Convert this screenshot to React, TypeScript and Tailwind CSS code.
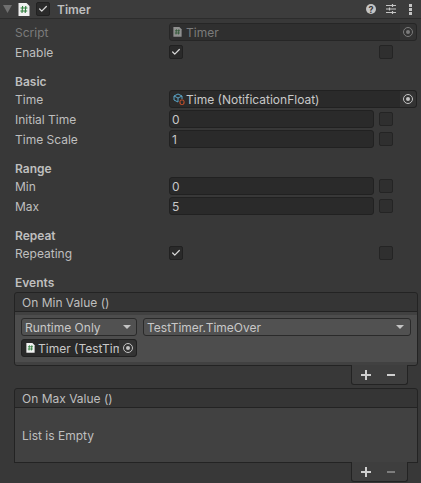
import React from "react";
import { Check } from "lucide-react";

function ScriptIcon({ size = 12, dim = false }: { size?: number; dim?: boolean }) {
  return (
    <svg width={size} height={size * 13 / 12} viewBox="0 0 12 13" className={`shrink-0 ${dim ? "opacity-50" : ""}`}>
      <path d="M0.5 0h8l3 3v10h-11z" fill="#f1f1f1" />
      <path d="M4.6 3 4 10M7.8 3l-.6 7M2.6 5h6.8M2.4 8h6.8" stroke="#2e7d3c" strokeWidth="1.1" fill="none" />
    </svg>
  );
}

function Toggle() {
  return (
    <div className="w-[14px] h-[14px] rounded-[2px] bg-[#2a2a2a] border border-[#212121] flex items-center justify-center">
      <Check size={10} strokeWidth={3} className="text-[#d8d8d8]" />
    </div>
  );
}

function Empty() {
  return <div className="w-[14px] h-[14px] rounded-[2px] bg-[#2f2f2f] border border-[#242424]" />;
}

function Picker({ dim = false, wide = false }: { dim?: boolean; wide?: boolean }) {
  return (
    <div className={`${wide ? "w-[17px]" : "w-[16px]"} h-full bg-[#333333] rounded-r-[3px] flex items-center justify-center`}>
      <div className={`w-[10px] h-[10px] rounded-full border flex items-center justify-center ${dim ? "border-[#7c7c7c]" : "border-[#c4c4c4]"}`}>
        <div className={`w-[4px] h-[4px] rounded-full ${dim ? "bg-[#7c7c7c]" : "bg-[#c4c4c4]"}`} />
      </div>
    </div>
  );
}

function Row({ label, children, dim = false }: { label: string; children: React.ReactNode; dim?: boolean }) {
  return (
    <div className="h-[20px] flex items-center">
      <div className={`w-[154px] shrink-0 pt-[2px] ${dim ? "text-[#7b7b7b]" : "text-[#bfbfbf]"}`}>{label}</div>
      {children}
    </div>
  );
}

function NumberRow({ label, value }: { label: string; value: string }) {
  return (
    <Row label={label}>
      <div className="w-[205px] h-[18px] rounded-[3px] bg-[#2a2a2a] border border-[#212121] pl-[2px] pt-[2px] flex items-center text-[#c8c8c8]">
        {value}
      </div>
      <div className="ml-[5px]">
        <Empty />
      </div>
    </Row>
  );
}

function ToggleRow({ label }: { label: string }) {
  return (
    <Row label={label}>
      <Toggle />
      <div className="ml-[196px]">
        <Empty />
      </div>
    </Row>
  );
}

function Section({ title, children }: { title: string; children: React.ReactNode }) {
  return (
    <div className="mt-[11px]">
      <div className="h-[16px] pt-[2px] flex items-center font-semibold text-[#bfbfbf]">{title}</div>
      {children}
    </div>
  );
}

function Footer({ minusDim = false }: { minusDim?: boolean }) {
  return (
    <div className="flex justify-end pr-[10px]">
      <div className="w-[57px] h-[20px] -mt-px pl-[9px] bg-[#3e3e3e] border border-t-0 border-[#232323] rounded-b-[3px] flex items-center gap-[15px]">
        <svg width="10" height="10" viewBox="0 0 10 10">
          <path d="M4 0h2v4h4v2H6v4H4V6H0V4h4z" fill="#cfcfcf" />
        </svg>
        <svg width="10" height="10" viewBox="0 0 10 10">
          <rect x="1" y="4" width="8" height="2" fill={minusDim ? "#7d7d7d" : "#cfcfcf"} />
        </svg>
      </div>
    </div>
  );
}

function ListHeader({ title }: { title: string }) {
  return (
    <div className="h-[20px] bg-[#353535] border border-[#232323] rounded-t-[3px] pl-[7px] pt-px flex items-center text-[#bfbfbf]">
      {title}
    </div>
  );
}

function Arrow() {
  return (
    <svg width="8" height="4" viewBox="0 0 8 4">
      <path d="M0 0h8L4 4z" fill="#c4c4c4" />
    </svg>
  );
}

export default function App() {
  return (
    <div
      className="w-[421px] h-[483px] overflow-hidden bg-[#383838] text-[12px] leading-none"
      style={{ fontFamily: "Inter, sans-serif" }}
    >
      {/* component header */}
      <div className="h-[19px] bg-[#3c3c3c] border-b border-[#2c2c2c] flex items-center pl-[3px]">
        <svg width="9" height="8" viewBox="0 0 9 8">
          <path d="M0 0h9L4.5 8z" fill="#6f6f6f" />
        </svg>
        <div className="ml-[6px]">
          <ScriptIcon size={12} />
        </div>
        <div className="ml-[6px]">
          <Toggle />
        </div>
        <div className="ml-[7px] pt-px font-semibold text-[#bfbfbf]">Timer</div>
        <div className="ml-auto flex items-center pr-[9px]">
          <div className="w-[10px] h-[10px] rounded-full bg-[#c4c4c4] text-[#383838] text-[9px] font-bold flex items-center justify-center">?</div>
          <svg width="10" height="10" viewBox="0 0 10 10" className="ml-[10px]">
            <path d="M0 1.5h10M0 5h10M0 8.5h10" stroke="#c4c4c4" strokeWidth="1" />
            <path d="M6.5 0v3M3.5 3.5v3M6.5 7v3" stroke="#c4c4c4" strokeWidth="1.2" />
          </svg>
          <svg width="3" height="11" viewBox="0 0 3 11" className="ml-[13px]">
            <rect x="0" y="0" width="3" height="3" fill="#c4c4c4" />
            <rect x="0" y="4" width="3" height="3" fill="#c4c4c4" />
            <rect x="0" y="8" width="3" height="3" fill="#c4c4c4" />
          </svg>
        </div>
      </div>

      <div className="pl-[15px] pr-[4px] pt-[3px]">
        <Row label="Script" dim>
          <div className="w-[248px] h-[18px] rounded-[3px] bg-[#2f2f2f] border border-[#262626] flex items-center text-[#7b7b7b]">
            <div className="w-[16px] shrink-0 pl-[3px]">
              <ScriptIcon size={9} dim />
            </div>
            <span className="pt-px">Timer</span>
            <div className="ml-auto h-full">
              <Picker dim />
            </div>
          </div>
        </Row>
        <ToggleRow label="Enable" />

        <Section title="Basic">
          <Row label="Time">
            <div className="w-[248px] h-[18px] rounded-[3px] bg-[#2a2a2a] border border-[#212121] flex items-center text-[#c8c8c8]">
              <div className="w-[16px] shrink-0 pl-[3px]">
                <svg width="12" height="12" viewBox="0 0 12 12">
                  <path d="M5 1 9 3v3M5 1 1 3v4l4 2M1 3l4 2 4-2M5 5v4" stroke="#5aa5c8" strokeWidth="1" fill="none" />
                  <rect x="7" y="7" width="4" height="4.5" rx="1.5" stroke="#d9552b" strokeWidth="1" fill="none" />
                </svg>
              </div>
              <span className="pt-px">Time (NotificationFloat)</span>
              <div className="ml-auto h-full">
                <Picker />
              </div>
            </div>
          </Row>
          <NumberRow label="Initial Time" value="0" />
          <NumberRow label="Time Scale" value="1" />
        </Section>

        <Section title="Range">
          <NumberRow label="Min" value="0" />
          <NumberRow label="Max" value="5" />
        </Section>

        <Section title="Repeat">
          <ToggleRow label="Repeating" />
        </Section>

        <div className="mt-[11px] h-[16px] pt-[2px] flex items-center font-semibold text-[#bfbfbf]">Events</div>

        <div className="mt-[2px] -mx-px">
          <ListHeader title="On Min Value ()" />
          <div className="h-[55px] -mt-px bg-[#414141] border border-[#232323] rounded-b-[3px] py-[3px]">
            <div className="h-full bg-[#4d4d4d] px-[6px] pt-[3px] flex flex-col gap-[3px]">
              <div className="flex gap-[6px]">
                <div className="w-[116px] h-[18px] rounded-[3px] bg-[#515151] border border-[#2a2a2a] pl-[3px] pr-[5px] flex items-center justify-between text-[#c8c8c8]">
                  <span className="pt-px">Runtime Only</span>
                  <Arrow />
                </div>
                <div className="flex-1 h-[18px] rounded-[3px] bg-[#515151] border border-[#2a2a2a] pl-[3px] pr-[6px] flex items-center justify-between text-[#c8c8c8]">
                  <span className="pt-px">TestTimer.TimeOver</span>
                  <Arrow />
                </div>
              </div>
              <div className="w-[116px] h-[18px] rounded-[3px] bg-[#2a2a2a] border border-[#212121] flex items-center text-[#c8c8c8] overflow-hidden">
                <div className="w-[16px] shrink-0 pl-[4px]">
                  <ScriptIcon size={9} />
                </div>
                <span className="pt-px whitespace-nowrap overflow-hidden flex-1">Timer (TestTimer)</span>
                <div className="h-full shrink-0">
                  <Picker wide />
                </div>
              </div>
            </div>
          </div>
          <Footer />
        </div>

        <div className="mt-[3px] -mx-px">
          <ListHeader title="On Max Value ()" />
          <div className="h-[56px] -mt-px bg-[#414141] border border-[#232323] pl-[7px] pt-[2px] flex items-center text-[#bfbfbf]">
            List is Empty
          </div>
          <Footer minusDim />
        </div>
      </div>
    </div>
  );
}
